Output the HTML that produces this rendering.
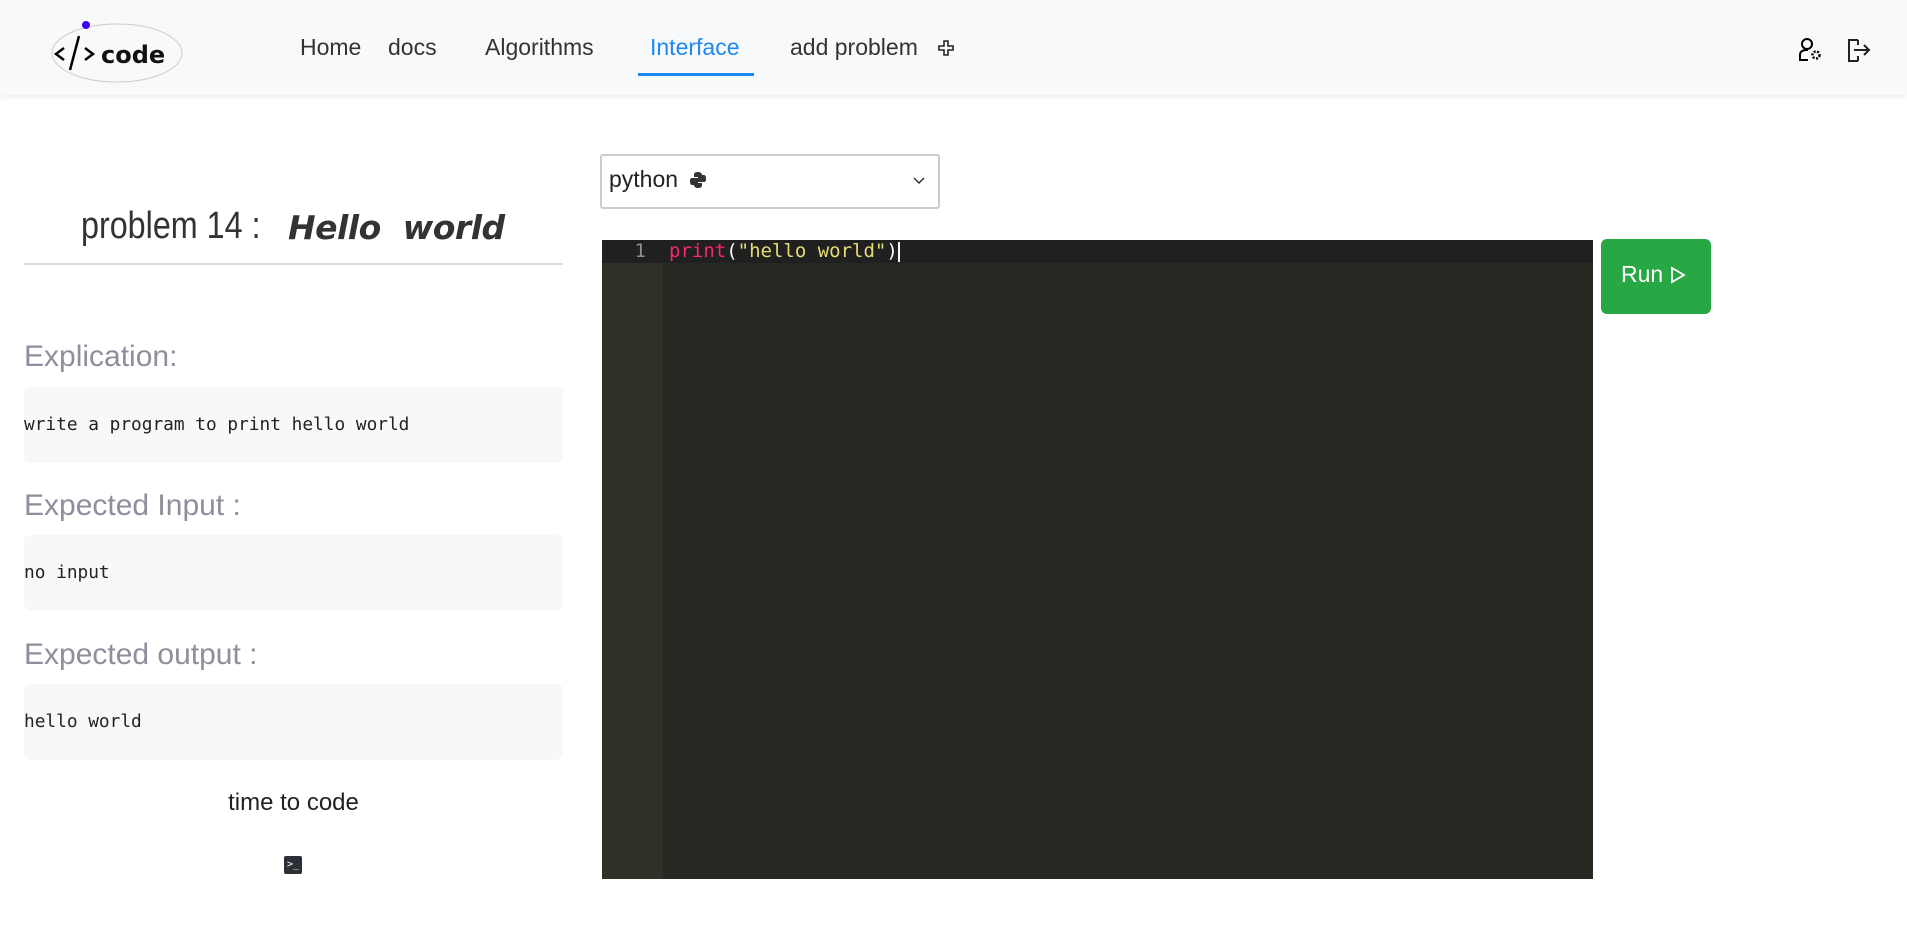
<!DOCTYPE html>
<html><head><meta charset="utf-8"><style>
*{margin:0;padding:0;box-sizing:border-box}
body{width:1907px;height:927px;background:#fff;font-family:"Liberation Sans",sans-serif;color:#333;position:relative;overflow:hidden}
.nav{position:absolute;left:0;top:0;width:1907px;height:95px;background:#f8f9fa;box-shadow:0 2px 6px rgba(0,0,0,.08)}
.a{position:absolute;top:34px;font-size:23px;color:#333}
.abs{position:absolute}
.lbl{position:absolute;left:24px;font-size:30px;color:#8e8e9c;font-weight:300}
.box{position:absolute;left:24px;width:539px;height:76px;background:#f7f8fa;border-radius:6px;font-family:"DejaVu Sans Mono",monospace;font-size:17.8px;color:#222;line-height:76px}
</style></head><body>
<div class="nav">
<svg class="abs" style="left:50px;top:18px" width="136" height="66">
<ellipse cx="67" cy="35" rx="65" ry="29" fill="none" stroke="#ccc" stroke-width="1"/>
<circle cx="36" cy="7" r="4" fill="#3b00ff"/>
<path d="M14 30 L6 36 L14 42" stroke="#000" stroke-width="2.5" fill="none"/>
<path d="M29 18 L20 52" stroke="#000" stroke-width="2.5"/>
<path d="M35 30 L43 36 L35 42" stroke="#000" stroke-width="2.5" fill="none"/>
<text x="51" y="45" font-family="DejaVu Sans,sans-serif" font-weight="bold" font-size="24" fill="#111">code</text>
</svg>
<div class="a" style="left:300px">Home</div>
<div class="a" style="left:388px">docs</div>
<div class="a" style="left:485px">Algorithms</div>
<div class="a" style="left:650px;color:#1e88f5">Interface</div>
<div class="abs" style="left:638px;top:73px;width:116px;height:3px;background:#1e88f5"></div>
<div class="a" style="left:790px">add problem</div>
<svg class="abs" style="left:937px;top:39px" width="18" height="18" viewBox="0 0 18 18"><path d="M7 2h4v5h5v4h-5v5H7v-5H2V7h5z" fill="none" stroke="#222" stroke-width="1.6"/></svg>
<svg class="abs" style="left:1797px;top:37px" width="28" height="26" viewBox="0 0 28 26"><circle cx="10" cy="7" r="5" fill="none" stroke="#000" stroke-width="2"/><path d="M3 24V18q0-5 7-5h1" fill="none" stroke="#000" stroke-width="2"/><path d="M3 23h8" stroke="#000" stroke-width="2"/><circle cx="19" cy="18" r="3.5" fill="none" stroke="#000" stroke-width="2.5" stroke-dasharray="2 1.5"/></svg>
<svg class="abs" style="left:1847px;top:38px" width="24" height="24" viewBox="0 0 24 24"><path d="M11 2H2v21h9" fill="none" stroke="#222" stroke-width="2"/><path d="M2 2v21M11 2v5M11 18v5" stroke="#222" stroke-width="2"/><path d="M7 12h15M17 7l5 5-5 5" fill="none" stroke="#222" stroke-width="2"/></svg>
</div>

<div class="abs" style="left:81px;top:205px;font-size:38px;color:#333;white-space:nowrap;transform:scaleX(.85);transform-origin:left;font-weight:300">problem 14 :</div>
<div class="abs" style="left:288px;top:208px;font-weight:bold;font-style:italic;font-family:'DejaVu Sans',sans-serif;font-size:33px;color:#333;letter-spacing:-0.5px;white-space:nowrap">Hello&nbsp; world</div>
<div class="abs" style="left:24px;top:263px;width:539px;height:2px;background:#ddd"></div>

<div class="lbl" style="top:340px">Explication:</div>
<div class="box" style="top:387px">write a program to print hello world</div>
<div class="lbl" style="top:489px">Expected Input :</div>
<div class="box" style="top:535px">no input</div>
<div class="lbl" style="top:638px">Expected output :</div>
<div class="box" style="top:684px">hello world</div>
<div class="abs" style="left:24px;width:539px;top:789px;text-align:center;font-size:24px;color:#222">time to code</div>
<div class="abs" style="left:284px;top:856px;width:18px;height:18px;background:#2b2f36;border-radius:2px;color:#fff;font-size:10px;line-height:18px;padding-left:3px;font-family:'DejaVu Sans Mono',monospace">&gt;_</div>

<div class="abs" style="left:600px;top:154px;width:340px;height:55px;border:2px solid #ccc;border-radius:3px;background:#fff"></div>
<div class="abs" style="left:609px;top:166px;font-size:23px;color:#222">python</div>
<svg class="abs" style="left:689px;top:171px" width="18" height="18" viewBox="0 0 18 18"><path d="M9 1C5 1 5 3 5 4v2h4v1H3C1 7 1 9 1 10s0 4 2 4h2v-3c0-1 1-2 2-2h4c1 0 2-1 2-2V4c0-2-2-3-4-3z" fill="#333"/><path d="M9 17c4 0 4-2 4-3v-2H9v-1h6c2 0 2-2 2-3s0-4-2-4h-2v3c0 1-1 2-2 2H7c-1 0-2 1-2 2v3c0 2 2 3 4 3z" fill="#333"/></svg>
<svg class="abs" style="left:913px;top:177px" width="12" height="8"><path d="M1 1l5 5 5-5" fill="none" stroke="#333" stroke-width="1.5"/></svg>

<div class="abs" style="left:602px;top:240px;width:991px;height:639px;background:#272822"></div>
<div class="abs" style="left:602px;top:240px;width:61px;height:639px;background:#2f3129"></div>
<div class="abs" style="left:602px;top:240px;width:991px;height:23px;background:#202020"></div>
<div class="abs" style="left:602px;top:240px;width:44px;text-align:right;font-family:'DejaVu Sans Mono',monospace;font-size:19px;line-height:23px;color:#8f908a">1</div>
<div class="abs" style="left:669px;top:240px;font-family:'DejaVu Sans Mono',monospace;font-size:19px;line-height:23px;color:#f8f8f2"><span style="color:#f92672">print</span>(<span style="color:#e6db74">"hello world"</span>)<span style="display:inline-block;width:2px;height:20px;background:#f8f8f0;vertical-align:middle"></span></div>

<div class="abs" style="left:1601px;top:239px;width:110px;height:75px;background:#28a745;border-radius:6px;color:#fff;font-size:23px;line-height:71px;padding-left:20px">Run <svg width="16" height="18" style="vertical-align:-2px"><path d="M2 2l12 7-12 7z" fill="none" stroke="#fff" stroke-width="1.8"/></svg></div>
</body></html>
